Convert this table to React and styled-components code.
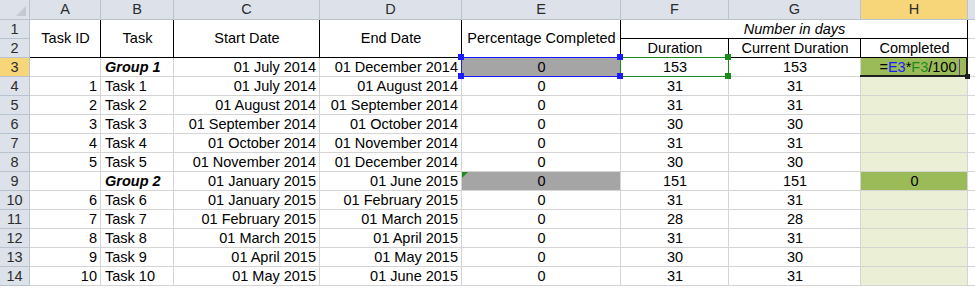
import React from 'react';
import styled, { createGlobalStyle, css } from 'styled-components';

const GlobalStyle = createGlobalStyle`
    html, body {
        margin: 0;
        padding: 0;
        background: #ffffff;
    }
    body {
        font-family: 'Liberation Sans', Arial, sans-serif;
    }
`;

const GRID = '#d4d4d4';
const HEAD_BG = '#dde2ea';
const HEAD_LINE = '#b9c3d0';
const HOT = '#f7d67a';

const Sheet = styled.div`
    display: grid;
    grid-template-columns: 30px 71px 73px 146px 142px 159px 108px 132px 107px 1fr;
    grid-template-rows: 20px repeat(14, 19px);
    width: 975px;
    height: 288px;
    overflow: hidden;
    font-size: 14.5px;
    color: #000;
`;

const HeadCell = styled.div`
    box-sizing: border-box;
    display: flex;
    align-items: center;
    justify-content: center;
    background: ${(p) => (p.$hot ? HOT : HEAD_BG)};
    border-right: 1px solid ${HEAD_LINE};
    border-bottom: 1px solid ${HEAD_LINE};
    color: #2c2c2c;
    line-height: 1;
    position: relative;
`;

const Corner = styled(HeadCell)`
    &::after {
        content: '';
        position: absolute;
        right: 3px;
        bottom: 3px;
        border-style: solid;
        border-width: 0 0 10px 10px;
        border-color: transparent transparent #c3c9d2 transparent;
    }
`;

const Cell = styled.div`
    box-sizing: border-box;
    display: flex;
    align-items: center;
    justify-content: ${(p) =>
        p.$align === 'left' ? 'flex-start' : p.$align === 'right' ? 'flex-end' : 'center'};
    padding: 0 3px 0 4px;
    white-space: nowrap;
    overflow: visible;
    background: ${(p) => p.$bg || '#ffffff'};
    border-right: 1px solid ${(p) => (p.$edge ? '#000' : GRID)};
    border-bottom: 1px solid ${(p) => (p.$edge ? '#000' : GRID)};
    font-weight: ${(p) => (p.$bold ? 700 : 400)};
    font-style: ${(p) => (p.$italic ? 'italic' : 'normal')};
    line-height: 1;
    position: relative;
    ${(p) => p.$rows && css`grid-row: span ${p.$rows};`}
    ${(p) => p.$cols && css`grid-column: span ${p.$cols};`}
`;

const Frame = styled.span`
    position: absolute;
    top: -1px;
    left: -1px;
    right: -1px;
    bottom: -1px;
    border: 1px solid ${(p) => p.$color};
    pointer-events: none;
    z-index: 2;
`;

const Knob = styled.span`
    position: absolute;
    z-index: 3;
    width: 6px;
    height: 6px;
    background: ${(p) => p.$color};
    ${(p) => (p.$top ? 'top: -4px;' : 'bottom: -3px;')}
    ${(p) => (p.$left ? 'left: -4px;' : 'right: -3px;')}
`;

const Active = styled.span`
    position: absolute;
    z-index: 2;
    top: -1px;
    left: -1px;
    right: -1px;
    bottom: -1px;
    border-right: 2px solid #1f1f1f;
    border-bottom: 2px solid #1f1f1f;
    &::after {
        content: '';
        position: absolute;
        right: -4px;
        bottom: -4px;
        width: 5px;
        height: 5px;
        background: #1f1f1f;
    }
`;

const Flag = styled.span`
    position: absolute;
    z-index: 2;
    top: 0;
    left: 0;
    border-style: solid;
    border-width: 6px 6px 0 0;
    border-color: #1f8a1f transparent transparent transparent;
`;

const Formula = styled.span`
    margin-left: 10px;
`;

const Ref = styled.span`
    color: ${(p) => p.$color};
`;

const Caret = styled.span`
    display: inline-block;
    width: 1px;
    height: 16px;
    margin-left: 2px;
    vertical-align: -3px;
    background: #6a3fa0;
`;

const GRAY = '#a5a5a5';
const OLIVE = '#9bbb59';
const PALE = '#ebefd5';
const BLUE = '#1a1aff';
const GREEN = '#1a8a1a';

const rows = [
    ['', 'Group 1', '01 July 2014', '01 December 2014', '0', '153', '153'],
    ['1', 'Task 1', '01 July 2014', '01 August 2014', '0', '31', '31'],
    ['2', 'Task 2', '01 August 2014', '01 September 2014', '0', '31', '31'],
    ['3', 'Task 3', '01 September 2014', '01 October 2014', '0', '30', '30'],
    ['4', 'Task 4', '01 October 2014', '01 November 2014', '0', '31', '31'],
    ['5', 'Task 5', '01 November 2014', '01 December 2014', '0', '30', '30'],
    ['', 'Group 2', '01 January 2015', '01 June 2015', '0', '151', '151'],
    ['6', 'Task 6', '01 January 2015', '01 February 2015', '0', '31', '31'],
    ['7', 'Task 7', '01 February 2015', '01 March 2015', '0', '28', '28'],
    ['8', 'Task 8', '01 March 2015', '01 April 2015', '0', '31', '31'],
    ['9', 'Task 9', '01 April 2015', '01 May 2015', '0', '30', '30'],
    ['10', 'Task 10', '01 May 2015', '01 June 2015', '0', '31', '31'],
];

const letters = ['A', 'B', 'C', 'D', 'E', 'F', 'G', 'H', ''];

const DataRow = ({ num, data }) => {
    const [id, task, start, end, pct, dur, cur] = data;
    const group = id === '';
    const first = num === 3;
    return (
        <>
            <HeadCell $hot={first}>{num}</HeadCell>
            <Cell $align="right">{id}</Cell>
            <Cell $align="left" $bold={group} $italic={group}>{task}</Cell>
            <Cell $align="right">{start}</Cell>
            <Cell $align="right">{end}</Cell>
            <Cell $bg={group ? GRAY : undefined}>
                {pct}
                {first && (
                    <>
                        <Frame $color={BLUE} />
                        <Knob $color={BLUE} $top $left />
                        <Knob $color={BLUE} $top />
                        <Knob $color={BLUE} $left />
                        <Knob $color={BLUE} />
                    </>
                )}
                {num === 9 && <Flag />}
            </Cell>
            <Cell>
                {dur}
                {first && (
                    <>
                        <Frame $color={GREEN} />
                        <Knob $color={GREEN} $top />
                        <Knob $color={GREEN} />
                    </>
                )}
            </Cell>
            <Cell>{cur}</Cell>
            <Cell $bg={group ? OLIVE : PALE}>
                {first ? (
                    <Formula>
                        =<Ref $color={BLUE}>E3</Ref>*<Ref $color={GREEN}>F3</Ref>/100
                        <Caret />
                    </Formula>
                ) : (
                    num === 9 && '0'
                )}
                {first && <Active />}
            </Cell>
            <Cell />
        </>
    );
};

const App = () => (
    <>
        <GlobalStyle />
        <Sheet>
            <Corner />
            {letters.map((l, i) => (
                <HeadCell key={i} $hot={l === 'H'}>{l}</HeadCell>
            ))}

            <HeadCell>1</HeadCell>
            <Cell $rows={2} $edge>Task ID</Cell>
            <Cell $rows={2} $edge>Task</Cell>
            <Cell $rows={2} $edge>Start Date</Cell>
            <Cell $rows={2} $edge>End Date</Cell>
            <Cell $rows={2} $edge>Percentage Completed</Cell>
            <Cell $cols={3} $edge $italic>Number in days</Cell>
            <Cell />

            <HeadCell>2</HeadCell>
            <Cell $edge>Duration</Cell>
            <Cell $edge>Current Duration</Cell>
            <Cell $edge>Completed</Cell>
            <Cell />

            {rows.map((r, i) => (
                <DataRow key={i} num={i + 3} data={r} />
            ))}
        </Sheet>
    </>
);

export default App;
